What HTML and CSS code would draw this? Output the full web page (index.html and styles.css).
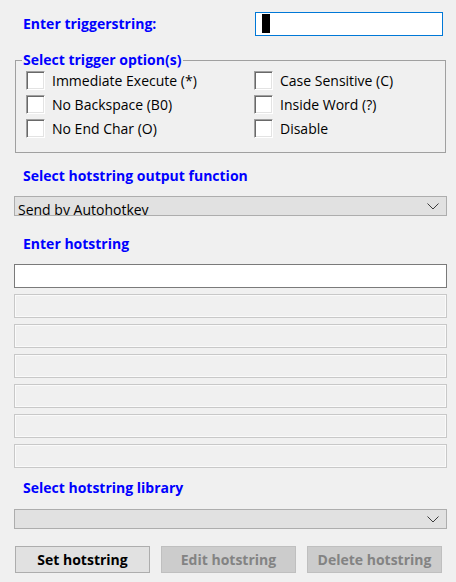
FILE: index.html
```html
<!DOCTYPE html>
<html>
<head>
<meta charset="utf-8">
<link rel="stylesheet" href="styles.css">
</head>
<body>
<div class="app">
  <div class="trigger-row">
    <span class="lbl lbl-trigger">Enter triggerstring:</span>
    <div class="edit edit-focus"><span class="caret"></span></div>
  </div>

  <fieldset class="group">
    <legend class="lbl legend">Select trigger option(s)</legend>
    <div class="opts">
      <label class="opt"><span class="cb"></span>Immediate Execute (*)</label>
      <label class="opt"><span class="cb"></span>Case Sensitive (C)</label>
      <label class="opt"><span class="cb"></span>No Backspace (B0)</label>
      <label class="opt"><span class="cb"></span>Inside Word (?)</label>
      <label class="opt"><span class="cb"></span>No End Char (O)</label>
      <label class="opt"><span class="cb"></span>Disable</label>
    </div>
  </fieldset>

  <div class="lbl section-lbl lbl-output">Select hotstring output function</div>
  <div class="combo combo-output">
    <span class="combo-text">Send by Autohotkey</span>
    <svg class="chev" width="12" height="7" viewBox="0 0 12 7"><polyline points="0.5,0.5 6,6 11.5,0.5" fill="none" stroke="#3c3c3c" stroke-width="1"/></svg>
  </div>

  <div class="lbl section-lbl lbl-hot">Enter hotstring</div>
  <div class="hot-list">
    <div class="edit edit-wide"></div>
    <div class="edit edit-disabled"></div>
    <div class="edit edit-disabled"></div>
    <div class="edit edit-disabled"></div>
    <div class="edit edit-disabled"></div>
    <div class="edit edit-disabled"></div>
    <div class="edit edit-disabled"></div>
  </div>

  <div class="lbl section-lbl lbl-lib">Select hotstring library</div>
  <div class="combo combo-lib">
    <span class="combo-text"></span>
    <svg class="chev" width="12" height="7" viewBox="0 0 12 7"><polyline points="0.5,0.5 6,6 11.5,0.5" fill="none" stroke="#3c3c3c" stroke-width="1"/></svg>
  </div>

  <div class="buttons">
    <button class="btn">Set hotstring</button>
    <button class="btn btn-disabled">Edit hotstring</button>
    <button class="btn btn-disabled">Delete hotstring</button>
  </div>
</div>
</body>
</html>
```

FILE: styles.css
```css
html, body {
  margin: 0;
  padding: 0;
  background: #f0f0f0;
}
body {
  width: 456px;
  height: 582px;
  overflow: hidden;
  font-family: "Open Sans", "Noto Sans", sans-serif;
  font-size: 14px;
  color: #000;
}
.app {
  padding: 12px 10px 0 14px;
}
.lbl {
  color: #0000ff;
  font-weight: bold;
  font-size: 14px;
}
.trigger-row {
  display: flex;
  align-items: flex-start;
  height: 24px;
}
.lbl-trigger {
  padding-left: 9px;
  line-height: 20px;
  margin-top: 2px;
  width: 232px;
}
.edit {
  box-sizing: border-box;
  height: 24px;
  background: #fff;
  border: 1px solid #7a7a7a;
}
.edit-focus {
  width: 188px;
  border-color: #0078d7;
  padding: 1px 0 0 6px;
}
.caret {
  display: block;
  width: 8px;
  height: 19px;
  background: #000;
}
.group {
  margin: 15px 0 0 1px;
  width: 431px;
  box-sizing: border-box;
  height: 102px;
  border: 1px solid #a0a0a0;
  padding: 5px 0 0 10px;
}
.legend {
  padding: 0 2px 0 1px;
  margin-left: -4px;
  line-height: 18px;
}
.opts {
  display: grid;
  grid-template-columns: 228px 1fr;
  row-gap: 5px;
  margin-top: -3px;
}
.opt {
  display: flex;
  align-items: center;
  height: 19px;
  line-height: 19px;
  color: #000;
  font-size: 14px;
}
.cb {
  box-sizing: border-box;
  width: 19px;
  height: 19px;
  margin-right: 7px;
  background: #fff;
  border-style: solid;
  border-width: 1px;
  border-color: #a0a0a0 #ffffff #ffffff #a0a0a0;
  box-shadow: inset 1px 1px 0 #696969, inset -1px -1px 0 #e3e3e3;
}
.section-lbl {
  padding-left: 9px;
  line-height: 20px;
}
.lbl-output {
  margin-top: 13px;
}
.combo {
  box-sizing: border-box;
  width: 433px;
  height: 20px;
  background: #e1e1e1;
  border: 1px solid #adadad;
  display: flex;
  align-items: flex-start;
  justify-content: space-between;
  overflow: hidden;
}
.combo-output {
  margin-top: 10px;
}
.combo-text {
  padding: 3px 0 0 3px;
  line-height: 20px;
  font-size: 14px;
  color: #000;
}
.chev {
  margin: 6px 7px 0 0;
  flex: none;
}
.lbl-hot {
  margin-top: 18px;
}
.hot-list {
  margin-top: 10px;
  display: flex;
  flex-direction: column;
  gap: 6px;
}
.edit-wide {
  width: 433px;
  height: 24px;
}
.edit-disabled {
  width: 433px;
  background: #f0f0f0;
  border-color: #c8c8c8;
  box-shadow: inset 0 0 0 1px #fafafa;
}
.lbl-lib {
  margin-top: 10px;
}
.combo-lib {
  margin-top: 11px;
}
.buttons {
  display: flex;
  gap: 11px;
  margin-top: 17px;
  padding-left: 1px;
}
.btn {
  box-sizing: border-box;
  width: 135px;
  height: 27px;
  margin: 0;
  padding: 0;
  font-family: "Open Sans", "Noto Sans", sans-serif;
  font-weight: bold;
  font-size: 14px;
  color: #000;
  background: #e1e1e1;
  border: 1px solid #adadad;
}
.btn-disabled {
  color: #838383;
  background: #cccccc;
  border-color: #bfbfbf;
}
```
